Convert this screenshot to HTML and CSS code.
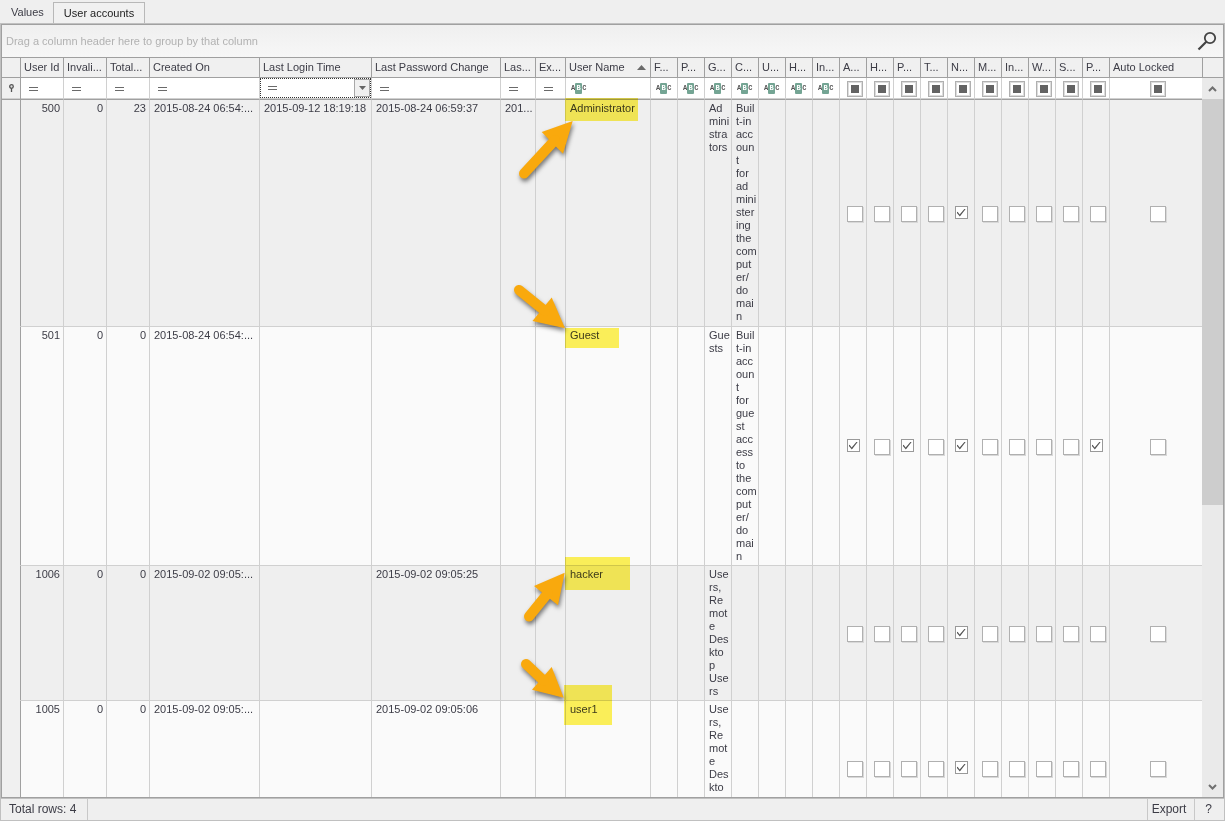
FILE: index.html
```html
<!DOCTYPE html>
<html lang="en">
<head>
<meta charset="utf-8">
<title>User accounts</title>
<link rel="stylesheet" href="styles.css">
</head>
<body>
<svg class="sprite" aria-hidden="true">
  <symbol id="eq" viewBox="0 0 9 4"><path d="M0 .5h9M0 3.5h9" stroke="#6a6a6a"/></symbol>
</svg>
<div class="app">
  <nav class="tabs" role="tablist">
    <button class="tab" role="tab">Values</button>
    <button class="tab tab-active" role="tab" aria-selected="true">User accounts</button>
  </nav>
  <main class="panel">
    <div class="group-bar">
      <span>Drag a column header here to group by that column</span>
      <button class="search" aria-label="Search"><svg width="20" height="20" viewBox="0 0 20 20"><circle cx="13" cy="7" r="5.2" fill="none" stroke="#444" stroke-width="1.8"/><path d="M9.3 10.7L1.500 18.500" stroke="#444" stroke-width="2.2"/></svg></button>
    </div>
    <div class="grid">
      <div class="grid-view">
        <table>
          <colgroup><col class="c-mark"><col class="c-num" span="3"><col class="c-created"><col class="c-login"><col class="c-password"><col class="c-last"><col class="c-exp"><col class="c-name"><col class="c-small" span="17"><col></colgroup>
          <thead>
            <tr class="head">
              <th></th><th>User Id</th><th>Invali...</th><th>Total...</th><th>Created On</th><th>Last Login Time</th><th>Last Password Change</th><th>Las...</th><th>Ex...</th>
              <th><span class="sorted">User Name<svg width="9" height="5" viewBox="0 0 9 5"><path d="M0 5L4.500 0L9 5z" fill="#6a6a6a"/></svg></span></th>
              <th>F...</th><th>P...</th><th>G...</th><th>C...</th><th>U...</th><th>H...</th><th>In...</th><th>A...</th><th>H...</th><th>P...</th><th>T...</th><th>N...</th><th>M...</th><th>In...</th><th>W...</th><th>S...</th><th>P...</th><th>Auto Locked</th>
            </tr>
            <tr class="filter">
              <td class="mark"><svg width="5" height="8" viewBox="0 0 5 8"><circle cx="2.500" cy="2.500" r="1.800" fill="#ddd" stroke="#555" stroke-width="1.300"/><path d="M2.500 4v4" stroke="#555" stroke-width="1.300"/></svg></td>
              <td><label class="op"><svg class="eq"><use href="#eq"/></svg><input type="text" aria-label="Filter User Id"></label></td>
              <td><label class="op"><svg class="eq"><use href="#eq"/></svg><input type="text" aria-label="Filter Invalid logins"></label></td>
              <td><label class="op"><svg class="eq"><use href="#eq"/></svg><input type="text" aria-label="Filter Total logins"></label></td>
              <td><label class="op"><svg class="eq"><use href="#eq"/></svg><input type="text" aria-label="Filter Created On"></label></td>
              <td class="focused"><div class="combo"><label class="op"><svg class="eq"><use href="#eq"/></svg><input type="text" aria-label="Filter Last Login Time"></label><button class="drop" aria-label="Open date list"><svg width="7" height="4" viewBox="0 0 7 4"><path d="M0 0h7L3.500 4z" fill="#666"/></svg></button></div></td>
              <td><label class="op"><svg class="eq"><use href="#eq"/></svg><input type="text" aria-label="Filter Last Password Change"></label></td>
              <td><label class="op"><svg class="eq"><use href="#eq"/></svg><input type="text" aria-label="Filter Last"></label></td>
              <td><label class="op"><svg class="eq"><use href="#eq"/></svg><input type="text" aria-label="Filter Expires"></label></td>
              <td><label class="op op-abc"><span class="abc">A<b>B</b>C</span><input type="text" aria-label="Filter User Name"></label></td>
              <td><label class="op op-abc"><span class="abc">A<b>B</b>C</span><input type="text" aria-label="Filter F"></label></td>
              <td><label class="op op-abc"><span class="abc">A<b>B</b>C</span><input type="text" aria-label="Filter P"></label></td>
              <td><label class="op op-abc"><span class="abc">A<b>B</b>C</span><input type="text" aria-label="Filter G"></label></td>
              <td><label class="op op-abc"><span class="abc">A<b>B</b>C</span><input type="text" aria-label="Filter C"></label></td>
              <td><label class="op op-abc"><span class="abc">A<b>B</b>C</span><input type="text" aria-label="Filter U"></label></td>
              <td><label class="op op-abc"><span class="abc">A<b>B</b>C</span><input type="text" aria-label="Filter H"></label></td>
              <td><label class="op op-abc"><span class="abc">A<b>B</b>C</span><input type="text" aria-label="Filter In"></label></td>
              <td class="ck"><input type="checkbox" class="mixed" aria-label="Filter A"></td><td class="ck"><input type="checkbox" class="mixed" aria-label="Filter H flag"></td><td class="ck"><input type="checkbox" class="mixed" aria-label="Filter P flag"></td><td class="ck"><input type="checkbox" class="mixed" aria-label="Filter T"></td><td class="ck"><input type="checkbox" class="mixed" aria-label="Filter N"></td><td class="ck"><input type="checkbox" class="mixed" aria-label="Filter M"></td><td class="ck"><input type="checkbox" class="mixed" aria-label="Filter In flag"></td><td class="ck"><input type="checkbox" class="mixed" aria-label="Filter W"></td><td class="ck"><input type="checkbox" class="mixed" aria-label="Filter S"></td><td class="ck"><input type="checkbox" class="mixed" aria-label="Filter P second flag"></td><td class="ck"><input type="checkbox" class="mixed" aria-label="Filter Auto Locked"></td>
            </tr>
          </thead>
          <tbody>
            <tr class="first">
              <td class="mark"></td><td class="n">500</td><td class="n">0</td><td class="n">23</td><td>2015-08-24 06:54:...</td><td>2015-09-12 18:19:18</td><td>2015-08-24 06:59:37</td><td>201...</td><td></td><td>Administrator</td><td></td><td></td>
              <td>Ad<br>mini<br>stra<br>tors</td><td>Buil<br>t-in<br>acc<br>oun<br>t<br>for<br>ad<br>mini<br>ster<br>ing<br>the<br>com<br>put<br>er/<br>do<br>mai<br>n</td><td></td><td></td><td></td>
              <td class="ck"><input type="checkbox" aria-label="A"></td><td class="ck"><input type="checkbox" aria-label="H"></td><td class="ck"><input type="checkbox" aria-label="P"></td><td class="ck"><input type="checkbox" aria-label="T"></td><td class="ck"><input type="checkbox" aria-label="N" checked></td><td class="ck"><input type="checkbox" aria-label="M"></td><td class="ck"><input type="checkbox" aria-label="In"></td><td class="ck"><input type="checkbox" aria-label="W"></td><td class="ck"><input type="checkbox" aria-label="S"></td><td class="ck"><input type="checkbox" aria-label="P second"></td><td class="ck"><input type="checkbox" aria-label="Auto Locked"></td>
            </tr>
            <tr>
              <td class="mark"></td><td class="n">501</td><td class="n">0</td><td class="n">0</td><td>2015-08-24 06:54:...</td><td></td><td></td><td></td><td></td><td>Guest</td><td></td><td></td>
              <td>Gue<br>sts</td><td>Buil<br>t-in<br>acc<br>oun<br>t<br>for<br>gue<br>st<br>acc<br>ess<br>to<br>the<br>com<br>put<br>er/<br>do<br>mai<br>n</td><td></td><td></td><td></td>
              <td class="ck"><input type="checkbox" aria-label="A" checked></td><td class="ck"><input type="checkbox" aria-label="H"></td><td class="ck"><input type="checkbox" aria-label="P" checked></td><td class="ck"><input type="checkbox" aria-label="T"></td><td class="ck"><input type="checkbox" aria-label="N" checked></td><td class="ck"><input type="checkbox" aria-label="M"></td><td class="ck"><input type="checkbox" aria-label="In"></td><td class="ck"><input type="checkbox" aria-label="W"></td><td class="ck"><input type="checkbox" aria-label="S"></td><td class="ck"><input type="checkbox" aria-label="P second" checked></td><td class="ck"><input type="checkbox" aria-label="Auto Locked"></td>
            </tr>
            <tr>
              <td class="mark"></td><td class="n">1006</td><td class="n">0</td><td class="n">0</td><td>2015-09-02 09:05:...</td><td></td><td>2015-09-02 09:05:25</td><td></td><td></td><td>hacker</td><td></td><td></td>
              <td>Use<br>rs,<br>Re<br>mot<br>e<br>Des<br>kto<br>p<br>Use<br>rs</td><td></td><td></td><td></td><td></td>
              <td class="ck"><input type="checkbox" aria-label="A"></td><td class="ck"><input type="checkbox" aria-label="H"></td><td class="ck"><input type="checkbox" aria-label="P"></td><td class="ck"><input type="checkbox" aria-label="T"></td><td class="ck"><input type="checkbox" aria-label="N" checked></td><td class="ck"><input type="checkbox" aria-label="M"></td><td class="ck"><input type="checkbox" aria-label="In"></td><td class="ck"><input type="checkbox" aria-label="W"></td><td class="ck"><input type="checkbox" aria-label="S"></td><td class="ck"><input type="checkbox" aria-label="P second"></td><td class="ck"><input type="checkbox" aria-label="Auto Locked"></td>
            </tr>
            <tr class="last">
              <td class="mark"></td><td class="n">1005</td><td class="n">0</td><td class="n">0</td><td>2015-09-02 09:05:...</td><td></td><td>2015-09-02 09:05:06</td><td></td><td></td><td>user1</td><td></td><td></td>
              <td>Use<br>rs,<br>Re<br>mot<br>e<br>Des<br>kto</td><td></td><td></td><td></td><td></td>
              <td class="ck"><input type="checkbox" aria-label="A"></td><td class="ck"><input type="checkbox" aria-label="H"></td><td class="ck"><input type="checkbox" aria-label="P"></td><td class="ck"><input type="checkbox" aria-label="T"></td><td class="ck"><input type="checkbox" aria-label="N" checked></td><td class="ck"><input type="checkbox" aria-label="M"></td><td class="ck"><input type="checkbox" aria-label="In"></td><td class="ck"><input type="checkbox" aria-label="W"></td><td class="ck"><input type="checkbox" aria-label="S"></td><td class="ck"><input type="checkbox" aria-label="P second"></td><td class="ck"><input type="checkbox" aria-label="Auto Locked"></td>
            </tr>
          </tbody>
        </table>
      </div>
      <div class="scroll">
        <div class="scroll-head"></div>
        <button class="scroll-btn" aria-label="Scroll up"><svg width="9" height="6" viewBox="0 0 9 6"><path d="M1 5L4.500 1.500L8 5" fill="none" stroke="#707070" stroke-width="2"/></svg></button>
        <div class="track"><div class="thumb"></div></div>
        <button class="scroll-btn" aria-label="Scroll down"><svg width="9" height="6" viewBox="0 0 9 6"><path d="M1 1L4.500 4.500L8 1" fill="none" stroke="#707070" stroke-width="2"/></svg></button>
      </div>
    </div>
  </main>
  <footer class="status">
    <span class="total">Total rows: 4</span>
    <button class="export">Export</button>
    <button class="help">?</button>
  </footer>
</div>
<svg class="notes notes-marker" width="1225" height="821" fill="#fff35b" aria-hidden="true">
  <rect x="565" y="98" width="73" height="23"/><rect x="565" y="328" width="54" height="20"/><rect x="565" y="557" width="65" height="33"/><rect x="564" y="685" width="48" height="40"/>
</svg>
<svg class="notes notes-arrows" width="1225" height="821" aria-hidden="true">
  <g fill="#f9a90d" stroke="none"><path d="M572.700 121L541.700 132L563 153.700z"/><path d="M565 328.300L551.700 297.500L532.500 321z"/><path d="M564.700 572.700L534 586L558 605.300z"/><path d="M563.700 697.700L551.700 667L532 689.700z"/></g>
  <g stroke="#f9a90d" stroke-width="10" stroke-linecap="round"><path d="M524 173.500L555 140"/><path d="M519 290L545 311"/><path d="M529 616.500L548 593"/><path d="M526 664L544 681"/></g>
</svg>
</body>
</html>
```
FILE: styles.css
```css
* { box-sizing: border-box; }
html, body { height: 100%; margin: 0; }
body { position: relative; overflow: hidden; background: #efefef; color: #3c3c46; font: 11px/13px "Liberation Sans", Arial, sans-serif; }
button { padding: 0; border: 0; background: transparent; color: inherit; font: inherit; }
.sprite { position: absolute; width: 0; height: 0; }
.app { display: flex; flex-direction: column; height: 100%; }

.tabs { display: flex; height: 24px; padding-top: 2px; flex: none; border-bottom: 1px solid #bcbcbc; }
.tab { padding: 0 9px 0 11px; }
.tab-active { height: 22px; padding: 0 10px; border: 1px solid #b8b8b8; border-bottom: 0; background: #f1f1f1; color: #222; }

.panel { display: flex; flex: 1; flex-direction: column; min-height: 0; border: 1px solid #a0a0a0; box-shadow: 0 0 0 1px #c0c0c0; margin: 0 1px; }
.group-bar { display: flex; flex: none; align-items: center; justify-content: space-between; height: 33px; padding: 0 6px 0 4px; border-bottom: 1px solid #a0a0a0; background: linear-gradient(#efefef, #f7f7f7); color: #b2b2b2; }
.search { display: flex; }
.grid { display: flex; flex: 1; min-height: 0; }
.grid-view { flex: 1; min-width: 0; overflow: hidden; background: #fafafa; }

table { width: 100%; border-collapse: separate; border-spacing: 0; table-layout: fixed; }
.c-mark { width: 19px; }
.c-num { width: 43px; }
.c-created { width: 110px; }
.c-login { width: 112px; }
.c-password { width: 129px; }
.c-last { width: 35px; }
.c-exp { width: 30px; }
.c-name { width: 85px; }
.c-small { width: 27px; }
th, td { padding: 2px 0 2px 4px; border: 0 solid #d0d0d0; border-width: 0 1px 1px 0; text-align: left; vertical-align: top; white-space: nowrap; }
th:last-child, td:last-child { border-right: 0; }
th { height: 20px; padding: 0 0 0 3px; border-color: #a0a0a0; background: #f0f0f0; font-weight: normal; vertical-align: middle; }
.sorted { display: flex; align-items: center; justify-content: space-between; padding-right: 4px; }
.filter td { height: 22px; padding: 0; border-bottom-color: #a0a0a0; background: #fff; box-shadow: inset 0 -1px #d0d0d0; vertical-align: middle; }
.filter .mark { padding-left: 7px; }
.op { display: flex; align-items: center; padding-left: 8px; }
.op-abc { padding-left: 5px; }
.op input { flex: 1; width: 0; min-width: 0; height: 18px; padding: 0; border: 0; outline: 0; background: transparent; font: inherit; }
.eq { flex: none; width: 9px; height: 4px; }
.abc { display: flex; flex: none; color: #555; font: bold 7px/11px "Liberation Mono", monospace; }
.abc b { width: 7px; border-radius: 1px; background: #74a594; color: #fff; text-align: center; }
.combo { display: flex; height: 20px; border: 1px dotted #333; }
.filter .focused { vertical-align: top; }
.combo .op { flex: 1; padding-left: 7px; }
.drop { display: flex; align-items: center; justify-content: center; width: 16px; border: 1px solid #a8a8a8; background: #f0f0f0; }
tbody tr:nth-child(odd) { background: #efefef; }
tbody tr:nth-child(even) { background: #fafafa; }
.first { height: 227px; }
.last { height: 135px; }
tr .mark, tbody .mark { border-right-color: #a0a0a0; background: #f0f0f0; }
tbody .mark { border-bottom-color: #f0f0f0; }
.n { padding-right: 3px; text-align: right; }
.filter .ck { padding: 0 0 0 3px; text-align: center; line-height: 0; }
tbody .ck { padding: 2px 0 0 3px; text-align: center; vertical-align: middle; line-height: 0; }
.ck input { width: 16px; height: 16px; margin: 0; appearance: none; border: 1px solid #b0b0b0; background: #fff; box-shadow: 1px 1px #d8d8d8; vertical-align: top; }
.ck input:checked { display: inline-grid; place-items: center; width: 13px; height: 13px; margin: 0 3px 3px 0; border-color: #999; box-shadow: none; }
.ck input:checked::before { content: ""; width: 9px; height: 8px; background: #555; clip-path: polygon(0 50%, 12% 40%, 35% 74%, 92% 0, 100% 8%, 37% 100%); }
.ck .mixed { display: inline-grid; place-items: center; box-shadow: inset 0 0 0 1px #ddd; }
.ck .mixed::before { content: ""; width: 8px; height: 8px; background: #636363; }

.scroll { display: flex; flex: none; flex-direction: column; width: 21px; background: #eaeaea; }
.scroll-head { flex: none; height: 20px; border-left: 1px solid #a0a0a0; border-bottom: 1px solid #a0a0a0; background: #f0f0f0; }
.scroll-btn { display: flex; flex: none; align-items: center; justify-content: center; height: 21px; }
.track { flex: 1; min-height: 0; }
.thumb { height: 60%; background: #cdcdcd; }

.status { display: flex; flex: none; height: 22px; margin-top: 1px; border: 1px solid #c0c0c0; border-top: 0; line-height: 21px; font-size: 12px; }
.total { margin-right: auto; padding: 0 11px 0 8px; border-right: 1px solid #c8c8c8; }
.export { width: 47px; padding-right: 4px; border-left: 1px solid #c8c8c8; text-align: center; }
.help { width: 30px; padding-right: 2px; border-left: 1px solid #c8c8c8; }

.notes { position: absolute; top: 0; left: 0; pointer-events: none; }
.notes-marker { mix-blend-mode: multiply; }
.notes-arrows { filter: drop-shadow(1px 3px 2px rgba(0, 0, 0, .5)); }
```
